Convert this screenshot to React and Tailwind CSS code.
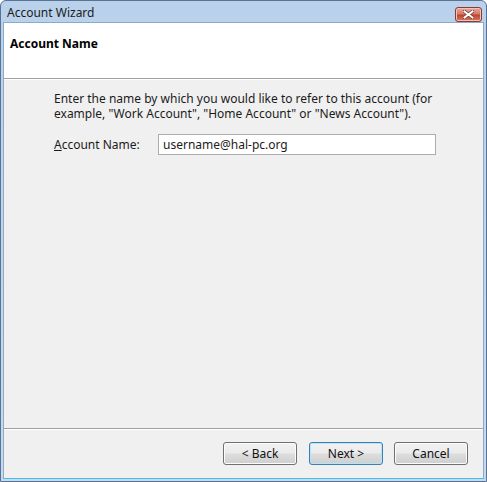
const font = { fontFamily: '"Noto Sans", "Open Sans", sans-serif' };

function Button({ children, primary }) {
  return (
    <button
      className={
        "w-[74px] h-[23px] rounded-[3px] border text-[12px] text-[#111] bg-[linear-gradient(#f2f2f2_0%,#ebebeb_48%,#dddddd_52%,#cfcfcf_100%)] " +
        (primary
          ? "border-[#3c7fb1] shadow-[inset_0_0_0_1px_#b6e3f8]"
          : "border-[#707070] shadow-[inset_0_0_0_1px_#fcfcfc]")
      }
    >
      {children}
    </button>
  );
}

export default function App() {
  return (
    <div
      className="w-[487px] h-[482px] flex flex-col rounded-t-[6px] border border-[#5a7393] bg-[linear-gradient(#b9d1ea,#c6daef)] overflow-hidden"
      style={font}
    >
      {/* Title bar */}
      <div className="h-[21px] flex items-center justify-between pl-[6px] pr-[4px]">
        <span className="text-[12px] text-[#1b1b1b] leading-none pt-[2px]">Account Wizard</span>
        <div className="w-[27px] h-[15px] mt-[5px] rounded-[3px] border border-[#8b3a3a] bg-[linear-gradient(#e9a99b,#d47a68_45%,#c0442f_55%,#d77a62)] flex items-center justify-center shadow-[inset_0_0_0_1px_#f1c3b8]">
          <svg width="11" height="9" viewBox="0 0 11 9">
            <path d="M1.5 1.5 L9.5 7.5 M9.5 1.5 L1.5 7.5" stroke="#5a2a22" strokeWidth="3.2" strokeLinecap="square" />
            <path d="M1.5 1.5 L9.5 7.5 M9.5 1.5 L1.5 7.5" stroke="#fff" strokeWidth="2" strokeLinecap="square" />
          </svg>
        </div>
      </div>

      {/* Client area */}
      <div className="flex-1 mx-[2px] mb-[2px] flex flex-col bg-[#f0f0f0] border border-[#8fa9c8] border-b-[#3fc2e8]">
        {/* Header */}
        <div className="h-[56px] bg-white px-[6px] pt-[12px] border-b border-[#a0a0a0]">
          <div className="text-[12px] font-bold text-black">Account Name</div>
        </div>
        <div className="h-px bg-white" />

        {/* Body */}
        <div className="flex-1 pl-[50px] pt-[11px] text-[12px] text-[#1b1b1b]">
          <p className="leading-[15px]">Enter the name by which you would like to refer to this account (for</p>
          <p className="leading-[15px]">example, "Work Account", "Home Account" or "News Account").</p>
          <div className="flex items-center mt-[13px]">
            <label className="w-[104px]">
              <span className="underline">A</span>ccount Name:
            </label>
            <div className="w-[278px] h-[21px] border border-[#abadb3] bg-white flex items-center pl-[4px]">
              username@hal-pc.org
            </div>
          </div>
        </div>

        {/* Footer */}
        <div className="border-t border-[#a0a0a0]" />
        <div className="h-px bg-white" />
        <div className="flex justify-end pt-[12px] pb-[13px] pr-[15px]">
          <Button>&lt; Back</Button>
          <div className="w-[12px]" />
          <Button primary>Next &gt;</Button>
          <div className="w-[11px]" />
          <Button>Cancel</Button>
        </div>
      </div>
    </div>
  );
}
